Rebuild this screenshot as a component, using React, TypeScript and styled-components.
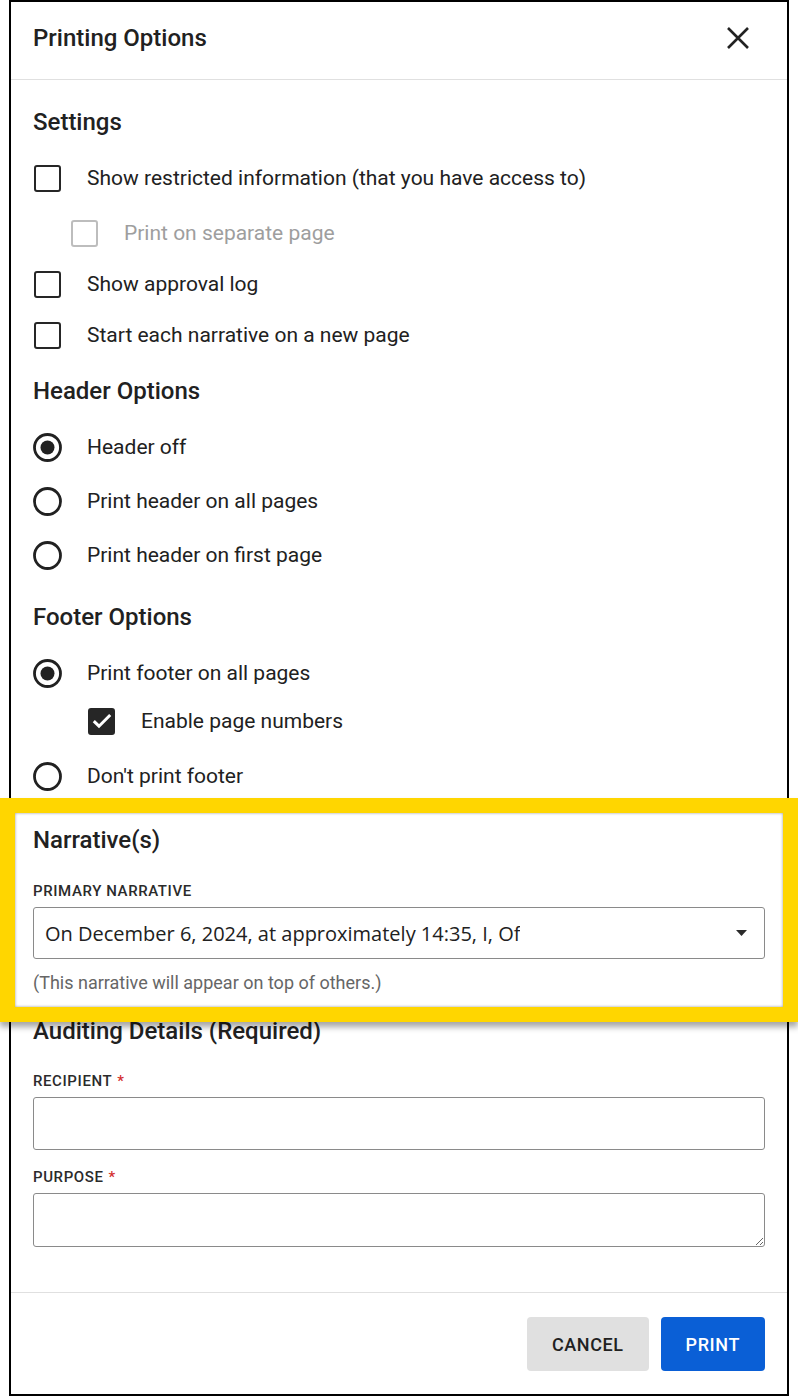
import React from "react";
import styled, { createGlobalStyle } from "styled-components";

const GlobalStyle = createGlobalStyle`
  html, body { margin: 0; padding: 0; background: #fff; }
  body {
    font-family: Roboto, "Noto Sans", "Liberation Sans", Arial, sans-serif;
    color: #212121;
    overflow: hidden;
  }
  * { box-sizing: border-box; }
`;

const Page = styled.div`
  width: 798px;
  padding-left: 9px;
`;

const Dialog = styled.div`
  width: 780px;
  border: 2px solid #000;
  background: #fff;
  display: flex;
  flex-direction: column;
`;

const Header = styled.header`
  height: 78px;
  padding: 22px 37px 0 22px;
  display: flex;
  justify-content: space-between;
  align-items: flex-start;
  border-bottom: 1px solid #e0e0e0;
`;

const Title = styled.h2`
  margin: 0;
  font-size: 24px;
  line-height: 28px;
  font-weight: 500;
  color: #212121;
`;

const CloseButton = styled.button`
  width: 24px;
  height: 24px;
  margin-top: 2px;
  padding: 0;
  border: none;
  background: none;
  display: flex;
  align-items: center;
  justify-content: center;
  cursor: pointer;
`;

const Body = styled.div`
  padding: 28px 22px 45px;
  display: flex;
  flex-direction: column;
`;

const SectionTitle = styled.h3<{ $mt?: number }>`
  margin: ${(p) => p.$mt ?? 0}px 0 0;
  font-size: 24px;
  line-height: 28px;
  font-weight: 500;
  color: #212121;
`;

const Option = styled.label<{ $mt?: number; $indent?: number; $disabled?: boolean }>`
  display: flex;
  align-items: center;
  height: 48px;
  margin-top: ${(p) => p.$mt ?? 0}px;
  padding-left: ${(p) => p.$indent ?? 0}px;
  font-size: 21px;
  line-height: 24px;
  color: ${(p) => (p.$disabled ? "#9e9e9e" : "#212121")};
`;

const ControlSlot = styled.span`
  width: 29px;
  height: 29px;
  display: flex;
  align-items: center;
  justify-content: center;
  flex-shrink: 0;
`;

const OptionText = styled.span`
  margin-left: 25px;
  white-space: nowrap;
`;

const Box = styled.span<{ $checked?: boolean; $disabled?: boolean }>`
  width: 27px;
  height: 27px;
  border-radius: 3px;
  border: 2.8px solid ${(p) => (p.$disabled ? "#bdbdbd" : "#262626")};
  background: ${(p) => (p.$checked ? "#262626" : "transparent")};
  display: flex;
  align-items: center;
  justify-content: center;
`;

const NarrativeSection = styled.section<{ $mt?: number }>`
  position: relative;
  display: flex;
  flex-direction: column;
  margin-top: ${(p) => p.$mt ?? 0}px;
`;

const Highlight = styled.div`
  position: absolute;
  top: -28px;
  left: -33px;
  right: -33px;
  bottom: -29px;
  border: 15px solid #ffd600;
  box-shadow: 0 5px 6px rgba(0, 0, 0, 0.35), inset 0 0 3px rgba(0, 0, 0, 0.4);
  pointer-events: none;
  z-index: 2;
`;

const FieldLabel = styled.div<{ $mt?: number }>`
  margin-top: ${(p) => p.$mt ?? 0}px;
  font-size: 15px;
  line-height: 18px;
  font-weight: 500;
  letter-spacing: 0.6px;
  text-transform: uppercase;
  color: #2b2b2b;
`;

const Required = styled.span`
  color: #d32f2f;
  margin-left: 5px;
`;

const SelectBox = styled.div`
  margin-top: 7px;
  height: 52px;
  border: 1.5px solid #8a8a8a;
  border-radius: 3px;
  padding: 0 17px 0 11px;
  display: flex;
  align-items: center;
  justify-content: space-between;
  font-family: "Open Sans", "Noto Sans", sans-serif;
  font-size: 20px;
  color: #212121;
`;

const SelectValue = styled.span`
  white-space: nowrap;
  overflow: hidden;
`;

const Helper = styled.div`
  margin-top: 14px;
  font-size: 18px;
  line-height: 20px;
  color: #666;
`;

const TextInput = styled.input`
  margin-top: 7px;
  height: 53px;
  width: 100%;
  border: 1.5px solid #8a8a8a;
  border-radius: 3px;
  font-family: inherit;
  font-size: 20px;
  padding: 0 11px;
  outline: none;
`;

const TextArea = styled.textarea`
  margin-top: 7px;
  height: 54px;
  width: 100%;
  border: 1.5px solid #8a8a8a;
  border-radius: 3px;
  font-family: inherit;
  font-size: 20px;
  padding: 8px 11px;
  outline: none;
  resize: vertical;
  display: block;
`;

const Footer = styled.footer`
  border-top: 1px solid #e0e0e0;
  padding: 24px 22px 23px;
  display: flex;
  justify-content: flex-end;
  gap: 12px;
`;

const Button = styled.button<{ $primary?: boolean }>`
  height: 54px;
  padding: 0 25px;
  border: none;
  border-radius: 4px;
  font-family: inherit;
  font-size: 18px;
  font-weight: 500;
  letter-spacing: 0.6px;
  text-transform: uppercase;
  background: ${(p) => (p.$primary ? "#0a5fd6" : "#e0e0e0")};
  color: ${(p) => (p.$primary ? "#ffffff" : "#212121")};
  cursor: pointer;
`;

const CheckIcon = () => (
  <svg width="20" height="16" viewBox="0 0 20 16">
    <path d="M1.8 8.2 L7 13.2 L18.2 2" fill="none" stroke="#fff" strokeWidth="3" />
  </svg>
);

const Checkbox = ({ checked, disabled }: { checked?: boolean; disabled?: boolean }) => (
  <ControlSlot>
    <Box $checked={checked} $disabled={disabled}>
      {checked && <CheckIcon />}
    </Box>
  </ControlSlot>
);

const Radio = ({ checked }: { checked?: boolean }) => (
  <ControlSlot>
    <svg width="29" height="29" viewBox="0 0 29 29">
      <circle cx="14.5" cy="14.5" r="13" fill="none" stroke="#212121" strokeWidth="2.8" />
      {checked && <circle cx="14.5" cy="14.5" r="7" fill="#212121" />}
    </svg>
  </ControlSlot>
);

const CloseIcon = () => (
  <svg width="24" height="24" viewBox="0 0 24 24">
    <path d="M2 2 L22 22 M22 2 L2 22" stroke="#222" strokeWidth="2.6" fill="none" />
  </svg>
);

const Caret = () => (
  <svg width="11" height="6" viewBox="0 0 11 6">
    <polygon points="0,0 11,0 5.5,6" fill="#2b2b2b" />
  </svg>
);

export default function App() {
  return (
    <>
      <GlobalStyle />
      <Page>
        <Dialog>
          <Header>
            <Title>Printing Options</Title>
            <CloseButton aria-label="Close">
              <CloseIcon />
            </CloseButton>
          </Header>
          <Body>
            <SectionTitle>Settings</SectionTitle>
            <Option $mt={18}>
              <Checkbox />
              <OptionText>Show restricted information (that you have access to)</OptionText>
            </Option>
            <Option $mt={7} $indent={37} $disabled>
              <Checkbox disabled />
              <OptionText>Print on separate page</OptionText>
            </Option>
            <Option $mt={3}>
              <Checkbox />
              <OptionText>Show approval log</OptionText>
            </Option>
            <Option $mt={3}>
              <Checkbox />
              <OptionText>Start each narrative on a new page</OptionText>
            </Option>

            <SectionTitle $mt={18}>Header Options</SectionTitle>
            <Option $mt={18}>
              <Radio checked />
              <OptionText>Header off</OptionText>
            </Option>
            <Option $mt={6}>
              <Radio />
              <OptionText>Print header on all pages</OptionText>
            </Option>
            <Option $mt={6}>
              <Radio />
              <OptionText>Print header on first page</OptionText>
            </Option>

            <SectionTitle $mt={24}>Footer Options</SectionTitle>
            <Option $mt={18}>
              <Radio checked />
              <OptionText>Print footer on all pages</OptionText>
            </Option>
            <Option $mt={0} $indent={54}>
              <Checkbox checked />
              <OptionText>Enable page numbers</OptionText>
            </Option>
            <Option $mt={7}>
              <Radio />
              <OptionText>Don't print footer</OptionText>
            </Option>

            <NarrativeSection $mt={26}>
              <SectionTitle>Narrative(s)</SectionTitle>
              <FieldLabel $mt={28}>Primary Narrative</FieldLabel>
              <SelectBox>
                <SelectValue>On December 6, 2024, at approximately 14:35, I, Of</SelectValue>
                <Caret />
              </SelectBox>
              <Helper>(This narrative will appear on top of others.)</Helper>
              <Highlight />
            </NarrativeSection>

            <SectionTitle $mt={24}>Auditing Details (Required)</SectionTitle>
            <FieldLabel $mt={27}>
              Recipient<Required>*</Required>
            </FieldLabel>
            <TextInput type="text" />
            <FieldLabel $mt={18}>
              Purpose<Required>*</Required>
            </FieldLabel>
            <TextArea />
          </Body>
          <Footer>
            <Button>Cancel</Button>
            <Button $primary>Print</Button>
          </Footer>
        </Dialog>
      </Page>
    </>
  );
}
